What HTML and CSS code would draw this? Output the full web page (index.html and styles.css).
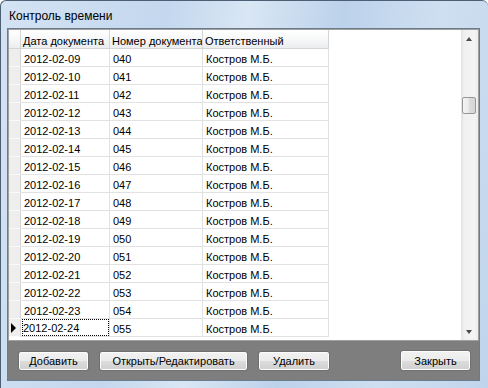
FILE: index.html
```html
<!DOCTYPE html>
<html lang="ru">
<head>
    <meta charset="UTF-8">
    <title>Контроль времени</title>
    <link rel="stylesheet" href="styles.css">
</head>
<body>

<div class="window">
    <div class="titlebar">Контроль времени</div>

    <div class="client">
        <div class="grid">
            <div class="table">
                <div class="row head">
                    <div class="rh"></div>
                    <div class="cell c1">Дата документа</div>
                    <div class="cell c2">Номер документа</div>
                    <div class="cell c3">Ответственный</div>
                </div>
                <div class="row"><div class="rh"></div><div class="cell c1">2012-02-09</div><div class="cell c2">040</div><div class="cell c3">Костров М.Б.</div></div>
                <div class="row"><div class="rh"></div><div class="cell c1">2012-02-10</div><div class="cell c2">041</div><div class="cell c3">Костров М.Б.</div></div>
                <div class="row"><div class="rh"></div><div class="cell c1">2012-02-11</div><div class="cell c2">042</div><div class="cell c3">Костров М.Б.</div></div>
                <div class="row"><div class="rh"></div><div class="cell c1">2012-02-12</div><div class="cell c2">043</div><div class="cell c3">Костров М.Б.</div></div>
                <div class="row"><div class="rh"></div><div class="cell c1">2012-02-13</div><div class="cell c2">044</div><div class="cell c3">Костров М.Б.</div></div>
                <div class="row"><div class="rh"></div><div class="cell c1">2012-02-14</div><div class="cell c2">045</div><div class="cell c3">Костров М.Б.</div></div>
                <div class="row"><div class="rh"></div><div class="cell c1">2012-02-15</div><div class="cell c2">046</div><div class="cell c3">Костров М.Б.</div></div>
                <div class="row"><div class="rh"></div><div class="cell c1">2012-02-16</div><div class="cell c2">047</div><div class="cell c3">Костров М.Б.</div></div>
                <div class="row"><div class="rh"></div><div class="cell c1">2012-02-17</div><div class="cell c2">048</div><div class="cell c3">Костров М.Б.</div></div>
                <div class="row"><div class="rh"></div><div class="cell c1">2012-02-18</div><div class="cell c2">049</div><div class="cell c3">Костров М.Б.</div></div>
                <div class="row"><div class="rh"></div><div class="cell c1">2012-02-19</div><div class="cell c2">050</div><div class="cell c3">Костров М.Б.</div></div>
                <div class="row"><div class="rh"></div><div class="cell c1">2012-02-20</div><div class="cell c2">051</div><div class="cell c3">Костров М.Б.</div></div>
                <div class="row"><div class="rh"></div><div class="cell c1">2012-02-21</div><div class="cell c2">052</div><div class="cell c3">Костров М.Б.</div></div>
                <div class="row"><div class="rh"></div><div class="cell c1">2012-02-22</div><div class="cell c2">053</div><div class="cell c3">Костров М.Б.</div></div>
                <div class="row"><div class="rh"></div><div class="cell c1">2012-02-23</div><div class="cell c2">054</div><div class="cell c3">Костров М.Б.</div></div>
                <div class="row current"><div class="rh"><span class="marker"></span></div><div class="cell c1"><span class="focus">2012-02-24</span></div><div class="cell c2">055</div><div class="cell c3">Костров М.Б.</div></div>
            </div>

            <div class="vscroll">
                <div class="arrow up"></div>
                <div class="track">
                    <div class="thumb"></div>
                </div>
                <div class="arrow down"></div>
            </div>
        </div>

        <div class="panel">
            <button type="button" class="btn btn-add">Добавить</button>
            <button type="button" class="btn btn-edit">Открыть/Редактировать</button>
            <button type="button" class="btn btn-del">Удалить</button>
            <button type="button" class="btn btn-close">Закрыть</button>
        </div>
    </div>
</div>

</body>
</html>
```

FILE: styles.css
```css
html, body {
    margin: 0;
    padding: 0;
}

body {
    width: 488px;
    height: 388px;
    overflow: hidden;
    font-family: "Liberation Sans", Arial, sans-serif;
    font-size: 11px;
    color: #000;
}

.window {
    width: 488px;
    height: 388px;
    box-sizing: border-box;
    border: 1px solid #4d5f75;
    border-bottom: none;
    border-right: none;
    border-radius: 6px 6px 0 0;
    padding: 0 8px 7px 6px;
    display: flex;
    flex-direction: column;
    background: linear-gradient(100deg, #d4e3f3 0%, #c3d7ee 30%, #d9e6f4 45%, #bcd2eb 62%, #cfdff1 80%, #c0d5ec 100%);
}

.titlebar {
    height: 27px;
    flex: none;
    padding-left: 2px;
    line-height: 30px;
    font-size: 12px;
    color: #000;
}

.client {
    flex: 1;
    display: flex;
    flex-direction: column;
    border: 1px solid #6b7b8c;
    background: #7e7e7e;
}

/* grid */

.grid {
    height: 312px;
    box-sizing: border-box;
    border: 1px solid #a0a0a0;
    background: #fff;
    display: flex;
}

.table {
    flex: 1;
}

.row {
    display: flex;
    height: 18px;
}

.row.head {
    height: 19px;
}

.rh {
    width: 12px;
    flex: none;
    box-sizing: border-box;
    border-right: 1px solid #d5d5d5;
    border-bottom: 1px solid #fafafa;
    background: #eeeeee;
    position: relative;
}

.cell {
    flex: none;
    box-sizing: border-box;
    border-right: 1px solid #e2e2e2;
    border-bottom: 1px solid #e2e2e2;
    padding: 2px 0 0 3px;
    line-height: 16px;
    white-space: nowrap;
    overflow: hidden;
}

.c1 { width: 89px; }
.c2 { width: 93px; }
.c3 { width: 126px; }

.head .rh,
.head .cell {
    background: linear-gradient(#ffffff, #f7f8f9 50%, #ecedee);
    border-right: 1px solid #d5d5d5;
    border-bottom: 1px solid #d5d5d5;
    padding: 3px 0 0 2px;
    line-height: 16px;
}

.head .rh {
    padding: 0;
}

.focus {
    display: block;
    margin: -2px 0 0 -2px;
    padding: 2px 0 0 1px;
    height: 15px;
    line-height: 15px;
    outline: 1px dotted #000;
    outline-offset: -1px;
}

.marker {
    position: absolute;
    left: 2px;
    top: 4px;
    width: 0;
    height: 0;
    border-top: 5px solid transparent;
    border-bottom: 5px solid transparent;
    border-left: 5px solid #000;
}

/* scrollbar */

.vscroll {
    width: 17px;
    flex: none;
    display: flex;
    flex-direction: column;
    background: linear-gradient(to right, #e3e3e3, #f0f0f0 20%, #f4f4f4 80%, #ececec);
}

.arrow {
    height: 17px;
    flex: none;
    position: relative;
}

.arrow::after {
    content: "";
    position: absolute;
    left: 5px;
    width: 0;
    height: 0;
    border-left: 3.5px solid transparent;
    border-right: 3.5px solid transparent;
}

.arrow.up::after {
    top: 7px;
    border-bottom: 4px solid #4a4a4a;
}

.arrow.down::after {
    top: 7px;
    border-top: 4px solid #4a4a4a;
}

.track {
    flex: 1;
    padding-top: 50px;
}

.thumb {
    width: 14px;
    height: 17px;
    margin-left: 1px;
    box-sizing: border-box;
    border: 1px solid #979797;
    border-radius: 2px;
    background: linear-gradient(to right, #f4f4f4, #e9e9e9 50%, #dcdcdc 51%, #d6d6d6);
}

/* bottom panel */

.panel {
    flex: 1;
    display: flex;
    align-items: flex-start;
    padding: 9px 8px 0 10px;
    gap: 10px;
}

.btn {
    height: 20px;
    box-sizing: border-box;
    border: 1px solid #707070;
    border-radius: 3px;
    padding: 0;
    margin-top: 1px;
    font-family: "Liberation Sans", Arial, sans-serif;
    font-size: 11px;
    color: #000;
    background: linear-gradient(#f2f2f2, #ebebeb 50%, #dddddd 51%, #cfcfcf);
    box-shadow: inset 0 0 0 1px #fcfcfc;
    cursor: pointer;
}

.btn-add { width: 71px; }
.btn-edit { width: 149px; }
.btn-del { width: 72px; }

.btn-close {
    width: 71px;
    height: 21px;
    margin-top: 0;
    margin-left: auto;
}
```
